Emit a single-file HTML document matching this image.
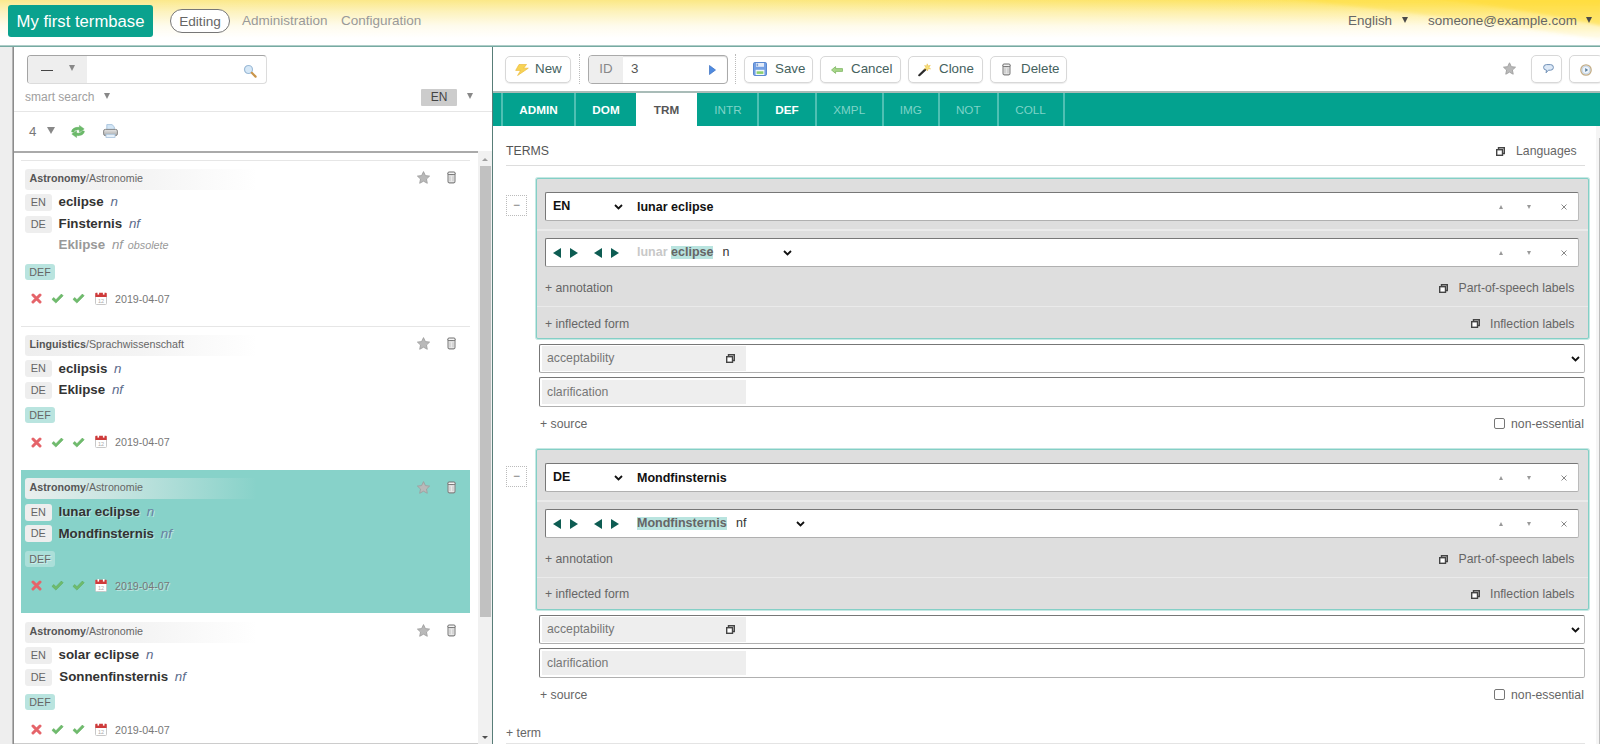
<!DOCTYPE html>
<html lang="en">
<head>
<meta charset="utf-8">
<title>My first termbase</title>
<style>
*{box-sizing:border-box;margin:0;padding:0}
html,body{width:1600px;height:744px;overflow:hidden;background:#fff}
body{font-family:"Liberation Sans",Arial,sans-serif;font-size:13.33px;color:#333;position:relative}
.abs{position:absolute}
/* header */
#header{z-index:5;position:absolute;left:0;top:0;width:1600px;height:47px;background:linear-gradient(to bottom,rgba(0,0,0,0) 45px,#aecdc8 45px,#aecdc8 46px,#76aaa2 46px),linear-gradient(to bottom,rgba(255,255,255,0) 0px,rgba(255,255,255,.45) 12px,rgba(255,255,255,.85) 26px,#fff 38px),linear-gradient(to right,#fbe98e 0%,#fbe884 45%,#fde466 75%,#ffe04c 100%);overflow:hidden}
#swoosh{position:absolute;left:1100px;top:0;width:500px;height:46px}
#tbname{position:absolute;left:8px;top:5px;width:145px;height:32px;background:#0aa28e;border-radius:3px;color:#fff;font-size:16.7px;line-height:34px;text-align:center;white-space:nowrap}
#editing{position:absolute;left:170px;top:9px;width:60px;height:24px;border:1px solid #777;border-radius:13px;background:#fff;color:#666;font-size:13.6px;line-height:23px;text-align:center}
.hlink{position:absolute;top:0;line-height:42px;color:#999;font-size:13.5px;white-space:nowrap}
.hr{position:absolute;top:0;line-height:41px;color:#666;font-size:13.45px;white-space:nowrap}
.tri{position:absolute;width:0;height:0;border-left:3.4px solid transparent;border-right:3.4px solid transparent;border-top:6.5px solid #4a4a4a}
/* left */
#lstrip{position:absolute;left:0;top:47px;width:14px;height:697px;background:#eee;border-right:1px solid #8c8c8c}
#lstrip:after{content:"";position:absolute;right:0;top:0;width:1px;height:100%;background:#b4b4b4}
#left{position:absolute;left:14px;top:46px;width:478px;height:698px;background:#fff}
#vline{position:absolute;left:492px;top:46px;width:1px;height:698px;background:#587d78;box-shadow:1px 0 0 rgba(150,205,198,.5)}
#searchbox{position:absolute;left:13px;top:9px;width:240px;height:29px;border:1px solid #a4a4a4;border-right-color:#dcdcdc;border-bottom-color:#dcdcdc;border-radius:4px;background:#fff;overflow:hidden}
#searchbox .sel{position:absolute;left:0;top:0;width:59px;height:27px;background:#eee}
.sep{position:absolute;left:0;height:1px;background:#e6e6e6}
#list{position:absolute;left:0;top:105px;width:464px;height:593px;border-top:2px solid #aaa;overflow:hidden}
#sbar{position:absolute;left:464px;top:105px;width:14px;height:593px;background:#f1f1f1}
#sbar .thumb{position:absolute;left:2px;top:15px;width:11px;height:450.5px;background:#c1c1c1}
.selbg{position:absolute;background:#87d2c9}
.selin .dom{background:linear-gradient(to right,rgba(240,240,240,.95) 0%,rgba(240,240,240,.55) 45%,rgba(240,240,240,0) 100%)}
.selin .def{background:rgba(255,255,255,.3)}
.selin .tm,.selin .date,.selin .def{text-shadow:1px 1px 0 rgba(255,255,255,.45)}
.dom{position:absolute;width:232px;height:21px;line-height:19.5px;padding-left:4.5px;font-size:10.7px;color:#666;background:linear-gradient(to right,#eeeeee 0%,#f4f4f4 50%,rgba(255,255,255,0) 100%);border-radius:3px;white-space:nowrap}
.dom b{color:#555}
.lg{position:absolute;width:26.5px;height:17px;line-height:17px;border-radius:3px;background:#eee;color:#666;font-size:10.9px;text-align:center}
.tm{margin-top:-.6px;position:absolute;font-size:13.33px;font-weight:bold;color:#333;white-space:nowrap;line-height:17px}
.tm i{font-weight:normal;color:#5b6b8c;margin-left:3px}
.tm.obs{color:#999}
.tm.obs i{color:#999}
.tm small{margin-left:1px;font-size:10.8px;font-weight:normal;font-style:italic;color:#999}
.def{position:absolute;width:30px;height:16px;line-height:16px;border-radius:3px;background:#b9e4df;color:#666;font-size:10.7px;text-align:center}
.date{position:absolute;font-size:10.7px;color:#777;line-height:14px;white-space:nowrap}
.ico{position:absolute}
/* right */
#right{position:absolute;left:493px;top:46px;width:1107px;height:698px;background:#fff}
.btn{position:absolute;top:10px;height:27px;border:1px solid #d8d8d8;border-radius:5px;background:#fff;font-size:13.33px;color:#45625e;line-height:24px;white-space:nowrap;box-shadow:0 1px 1px #ececec}
.btn span{position:absolute;top:0}
.dots{position:absolute;top:8px;width:0;height:30px;border-left:1px dotted #bbb}
#idbox{position:absolute;left:95px;top:9px;width:140px;height:29px;border:1px solid #aaa;border-radius:4px;overflow:hidden;background:#fff;box-shadow:inset 0 1px 1px #ddd}
#idbox .lab{position:absolute;left:0;top:0;width:34px;height:27px;background:#eee;color:#888;font-size:13.33px;line-height:26px;text-align:center}
#idbox .val{position:absolute;left:42px;top:0;line-height:26px;font-size:13.33px;color:#555}
#tabs{position:absolute;left:0;top:45px;width:1107px;height:35px;background:#03a28f;border-top:2px solid #a9bcb8}
.tab{position:absolute;top:0;height:33px;border-left:2px solid #4ec0b3;color:#fff;font-size:11.7px;font-weight:bold;line-height:33px;text-align:center}
.tab.dim{color:#7fd3c8;font-weight:normal}
.tab.on{background:#fff;color:#555;border-left:none;height:35px}
.tab.on + .tab{border-left-color:transparent}
.lbl{position:absolute;font-size:12.25px;color:#666;white-space:nowrap;line-height:15px}
.grp{position:absolute;width:1053px;height:161px;background:#dedede;border:1px solid #84cfc6;border-radius:2px;box-shadow:0 0 0 1px #c5e8e3}
.grp .divd{position:absolute;left:0;width:1051px;height:1px;background:#eaeaea}
.inp{position:absolute;left:8px;width:1035px;height:29px;background:#fff;border:1px solid #777;border-right-color:#bbb;border-bottom-color:#b0b0b0;border-radius:2px}
.inp2{position:absolute;left:45px;width:1048px;height:29px;background:#fff;border:1px solid #777;border-right-color:#bbb;border-bottom-color:#b0b0b0;border-radius:2px}
.inp2 .lab{position:absolute;left:1.5px;top:1.5px;width:204.5px;height:24.5px;background:#eee;color:#777;font-size:12.25px;line-height:24px;padding-left:5.5px}
.minus{position:absolute;width:21px;height:21px;border:1px dotted #bbb;color:#777;font-size:12px;line-height:18px;text-align:center}
.bt{font-size:12.5px;font-weight:bold;color:#111;position:absolute;line-height:27px;white-space:nowrap}
.hl{display:inline-block;height:13.3px;line-height:13.3px;color:#666;background:#b9e4df;vertical-align:baseline}
.selin .tm i{color:#6b80a0}
</style>
</head>
<body>
<div id="header">
  <svg id="swoosh" viewBox="0 0 500 46" preserveAspectRatio="none"><defs><filter id="bl" x="-10%" y="-50%" width="120%" height="200%"><feGaussianBlur stdDeviation="1.5"/></filter><linearGradient id="sg" x1="0" y1="0" x2="0" y2="1"><stop offset="0" stop-color="#ffde3c"/><stop offset="1" stop-color="#ffde3c" stop-opacity=".15"/></linearGradient></defs><g filter="url(#bl)"><path d="M180 -2 L502 -2 L502 40 Q380 20 180 -2Z" fill="url(#sg)" opacity=".5"/><path d="M330 -2 L502 -2 L502 26 Q430 10 330 -2Z" fill="#ffdd3a" opacity=".55"/></g></svg>
  <div id="tbname">My first termbase</div>
  <div id="editing">Editing</div>
  <div class="hlink" style="left:242px">Administration</div>
  <div class="hlink" style="left:341px">Configuration</div>
  <div class="hr" style="left:1348px">English</div><div class="tri" style="left:1402.3px;top:16.5px"></div>
  <div class="hr" style="left:1428px">someone@example.com</div><div class="tri" style="left:1586px;top:16.5px"></div>
</div>
<div id="lstrip"></div>
<div id="left">
  <div id="searchbox"><div class="sel"></div>
    <div class="abs" style="left:13px;top:14px;width:12px;height:1px;background:#444"></div>
    <div class="tri" style="left:41px;top:9px;border-left-width:3.5px;border-right-width:3.5px;border-top-width:6px;border-top-color:#888"></div>
    <svg class="ico" style="left:215px;top:8px" width="15" height="15" viewBox="0 0 15 15"><circle cx="5.5" cy="5.5" r="4" fill="#d6e8f7" stroke="#9dbbd6" stroke-width="1.2"/><path d="M8.8 8.8 L12.6 12.6" stroke="#c9954a" stroke-width="2.2" stroke-linecap="round"/></svg>
  </div>
  <div class="lbl" style="left:11px;top:44px;color:#a0a0a0;font-size:12px">smart search</div>
  <div class="tri" style="left:90px;top:47px;border-left-width:3.5px;border-right-width:3.5px;border-top-width:6.5px;border-top-color:#888"></div>
  <div class="abs" style="left:407px;top:43px;width:36px;height:17px;background:#ccc;color:#444;font-size:12px;line-height:17px;text-align:center;border-radius:1px">EN</div>
  <div class="tri" style="left:453px;top:47px;border-left-width:3.7px;border-right-width:3.7px;border-top-width:6.5px;border-top-color:#888"></div>
  <div class="sep" style="top:65px;width:478px"></div>
  <div class="lbl" style="left:15px;top:77.5px;font-size:13.33px;color:#777">4</div>
  <div class="tri" style="left:33px;top:81.3px;border-left-width:4.2px;border-right-width:4.2px;border-top-width:7px;border-top-color:#888"></div>
  <svg class="ico" style="left:57px;top:78.8px" width="14" height="13" viewBox="0 0 14 13"><path id="ra" d="M0.6 6.9 C0.8 3.4 4.5 1.9 8.4 2.5 L8.4 0.4 L13.2 3.9 L8.4 7.2 L8.4 5 C6 4.6 3.6 5.1 2.9 7.3Z" fill="#6cba6a" stroke="#58a858" stroke-width=".4"/><use href="#ra" transform="rotate(180 7 6.5)"/></svg>
  <svg class="ico" style="left:89px;top:78px" width="15" height="14" viewBox="0 0 15 14"><defs><linearGradient id="pg" x1="0" y1="0" x2="0" y2="1"><stop offset="0" stop-color="#e6e6e6"/><stop offset="1" stop-color="#a9a9a9"/></linearGradient></defs><path d="M3.8 6 V0.6 H9 L11.3 2.8 V6Z" fill="#d3e6f6" stroke="#9dbbd8" stroke-width=".8"/><rect x=".6" y="5.4" width="13.8" height="6.2" rx="1.7" fill="url(#pg)" stroke="#7d7d7d" stroke-width=".9"/><rect x="3" y="10.2" width="9" height="3.2" fill="#e6f0f9" stroke="#9dbbd8" stroke-width=".7"/></svg>
  <div id="list">
<div class="sep" style="left:7px;top:7px;width:449px"></div>
<div class="dom" style="left:11px;top:16px"><b>Astronomy</b>/Astronomie</div>
<svg class="ico" style="left:403px;top:18.2px" width="13" height="13" viewBox="0 0 13 13"><path d="M6.5 0.6 L8.4 4.6 L12.6 5.1 L9.5 8 L10.3 12.3 L6.5 10.2 L2.7 12.3 L3.5 8 L0.4 5.1 L4.6 4.6Z" fill="#b9b9b9" stroke="#9c9c9c" stroke-width=".8" stroke-linejoin="round"/></svg>
<svg class="ico" style="left:432.7px;top:18.2px" width="9" height="13" viewBox="0 0 9 13"><path d="M1 2.6 L1 10.6 Q1 11.8 2.4 11.9 L6.6 11.9 Q8 11.8 8 10.6 L8 2.6Z" fill="#e9e9e9" stroke="#828282" stroke-width="1.1"/><path d="M3 5.3 V10.3 M6 5.3 V10.3" stroke="#c9c9c9" stroke-width="1.2"/><rect x="0.8" y="1" width="7.4" height="2.6" rx="1.3" fill="#f5f5f5" stroke="#6f6f6f" stroke-width="1"/></svg>
<div class="lg" style="left:11px;top:41px">EN</div>
<div class="tm" style="left:44.5px;top:41px">eclipse <i>n</i></div>
<div class="lg" style="left:11px;top:63px">DE</div>
<div class="tm" style="left:44.5px;top:63px">Finsternis <i>nf</i></div>
<div class="tm obs" style="left:44.5px;top:83.5px">Eklipse <i>nf</i> <small>obsolete</small></div>
<div class="def" style="left:11px;top:111px">DEF</div>
<svg class="ico" style="left:16.5px;top:140.3px" width="11" height="11" viewBox="0 0 11 11"><path d="M2 2 L9 9 M9 2 L2 9" stroke="#e5646a" stroke-width="3" stroke-linecap="round"/></svg>
<svg class="ico" style="left:36.7px;top:140.3px" width="13" height="11" viewBox="0 0 13 11"><path d="M0.9 6.3 L2.9 4.5 L4.9 6.7 L10.4 1 L12.2 2.8 L4.9 10.1Z" fill="#6fbb6c" stroke="#58a858" stroke-width=".5" stroke-linejoin="round"/></svg>
<svg class="ico" style="left:58.2px;top:140.3px" width="13" height="11" viewBox="0 0 13 11"><path d="M0.9 6.3 L2.9 4.5 L4.9 6.7 L10.4 1 L12.2 2.8 L4.9 10.1Z" fill="#6fbb6c" stroke="#58a858" stroke-width=".5" stroke-linejoin="round"/></svg>
<svg class="ico" style="left:81px;top:138.8px" width="12" height="13" viewBox="0 0 12 13"><rect x=".5" y="1.5" width="11" height="11" rx="1" fill="#fff" stroke="#c8c8c8"/><path d="M.3 1.5 Q.3 .8 1 .8 H11 Q11.7 .8 11.7 1.5 V5 H.3Z" fill="#cf3a3a"/><rect x="2.5" y="0" width="1.6" height="2.6" fill="#fff"/><rect x="7.9" y="0" width="1.6" height="2.6" fill="#fff"/><text x="6" y="11" font-size="5.5" font-family="Liberation Sans" fill="#aaa" text-anchor="middle">12</text></svg>
<div class="date" style="left:101px;top:138.8px">2019-04-07</div>
<div class="sep" style="left:7px;top:173px;width:449px"></div>
<div class="dom" style="left:11px;top:182px"><b>Linguistics</b>/Sprachwissenschaft</div>
<svg class="ico" style="left:403px;top:184.2px" width="13" height="13" viewBox="0 0 13 13"><path d="M6.5 0.6 L8.4 4.6 L12.6 5.1 L9.5 8 L10.3 12.3 L6.5 10.2 L2.7 12.3 L3.5 8 L0.4 5.1 L4.6 4.6Z" fill="#b9b9b9" stroke="#9c9c9c" stroke-width=".8" stroke-linejoin="round"/></svg>
<svg class="ico" style="left:432.7px;top:184.2px" width="9" height="13" viewBox="0 0 9 13"><path d="M1 2.6 L1 10.6 Q1 11.8 2.4 11.9 L6.6 11.9 Q8 11.8 8 10.6 L8 2.6Z" fill="#e9e9e9" stroke="#828282" stroke-width="1.1"/><path d="M3 5.3 V10.3 M6 5.3 V10.3" stroke="#c9c9c9" stroke-width="1.2"/><rect x="0.8" y="1" width="7.4" height="2.6" rx="1.3" fill="#f5f5f5" stroke="#6f6f6f" stroke-width="1"/></svg>
<div class="lg" style="left:11px;top:207.2px">EN</div>
<div class="tm" style="left:44.5px;top:207.2px">eclipsis <i>n</i></div>
<div class="lg" style="left:11px;top:228.5px">DE</div>
<div class="tm" style="left:44.5px;top:228.5px">Eklipse <i>nf</i></div>
<div class="def" style="left:11px;top:254px">DEF</div>
<svg class="ico" style="left:16.5px;top:283.6px" width="11" height="11" viewBox="0 0 11 11"><path d="M2 2 L9 9 M9 2 L2 9" stroke="#e5646a" stroke-width="3" stroke-linecap="round"/></svg>
<svg class="ico" style="left:36.7px;top:283.6px" width="13" height="11" viewBox="0 0 13 11"><path d="M0.9 6.3 L2.9 4.5 L4.9 6.7 L10.4 1 L12.2 2.8 L4.9 10.1Z" fill="#6fbb6c" stroke="#58a858" stroke-width=".5" stroke-linejoin="round"/></svg>
<svg class="ico" style="left:58.2px;top:283.6px" width="13" height="11" viewBox="0 0 13 11"><path d="M0.9 6.3 L2.9 4.5 L4.9 6.7 L10.4 1 L12.2 2.8 L4.9 10.1Z" fill="#6fbb6c" stroke="#58a858" stroke-width=".5" stroke-linejoin="round"/></svg>
<svg class="ico" style="left:81px;top:282.1px" width="12" height="13" viewBox="0 0 12 13"><rect x=".5" y="1.5" width="11" height="11" rx="1" fill="#fff" stroke="#c8c8c8"/><path d="M.3 1.5 Q.3 .8 1 .8 H11 Q11.7 .8 11.7 1.5 V5 H.3Z" fill="#cf3a3a"/><rect x="2.5" y="0" width="1.6" height="2.6" fill="#fff"/><rect x="7.9" y="0" width="1.6" height="2.6" fill="#fff"/><text x="6" y="11" font-size="5.5" font-family="Liberation Sans" fill="#aaa" text-anchor="middle">12</text></svg>
<div class="date" style="left:101px;top:282.1px">2019-04-07</div>
<div class="selbg" style="left:7px;top:317px;width:449px;height:142.7px"><div class="abs selin" style="left:-7px;top:-317px">
<div class="dom" style="left:11px;top:325.4px"><b>Astronomy</b>/Astronomie</div>
<svg class="ico" style="left:403px;top:327.6px" width="13" height="13" viewBox="0 0 13 13"><path d="M6.5 0.6 L8.4 4.6 L12.6 5.1 L9.5 8 L10.3 12.3 L6.5 10.2 L2.7 12.3 L3.5 8 L0.4 5.1 L4.6 4.6Z" fill="#b9b9b9" stroke="#9c9c9c" stroke-width=".8" stroke-linejoin="round"/></svg>
<svg class="ico" style="left:432.7px;top:327.6px" width="9" height="13" viewBox="0 0 9 13"><path d="M1 2.6 L1 10.6 Q1 11.8 2.4 11.9 L6.6 11.9 Q8 11.8 8 10.6 L8 2.6Z" fill="#e9e9e9" stroke="#828282" stroke-width="1.1"/><path d="M3 5.3 V10.3 M6 5.3 V10.3" stroke="#c9c9c9" stroke-width="1.2"/><rect x="0.8" y="1" width="7.4" height="2.6" rx="1.3" fill="#f5f5f5" stroke="#6f6f6f" stroke-width="1"/></svg>
<div class="lg" style="left:11px;top:351px">EN</div>
<div class="tm" style="left:44.5px;top:351px">lunar eclipse <i>n</i></div>
<div class="lg" style="left:11px;top:372.3px">DE</div>
<div class="tm" style="left:44.5px;top:372.3px">Mondfinsternis <i>nf</i></div>
<div class="def" style="left:11px;top:397.8px">DEF</div>
<svg class="ico" style="left:16.5px;top:427.3px" width="11" height="11" viewBox="0 0 11 11"><path d="M2 2 L9 9 M9 2 L2 9" stroke="#e5646a" stroke-width="3" stroke-linecap="round"/></svg>
<svg class="ico" style="left:36.7px;top:427.3px" width="13" height="11" viewBox="0 0 13 11"><path d="M0.9 6.3 L2.9 4.5 L4.9 6.7 L10.4 1 L12.2 2.8 L4.9 10.1Z" fill="#6fbb6c" stroke="#58a858" stroke-width=".5" stroke-linejoin="round"/></svg>
<svg class="ico" style="left:58.2px;top:427.3px" width="13" height="11" viewBox="0 0 13 11"><path d="M0.9 6.3 L2.9 4.5 L4.9 6.7 L10.4 1 L12.2 2.8 L4.9 10.1Z" fill="#6fbb6c" stroke="#58a858" stroke-width=".5" stroke-linejoin="round"/></svg>
<svg class="ico" style="left:81px;top:425.8px" width="12" height="13" viewBox="0 0 12 13"><rect x=".5" y="1.5" width="11" height="11" rx="1" fill="#fff" stroke="#c8c8c8"/><path d="M.3 1.5 Q.3 .8 1 .8 H11 Q11.7 .8 11.7 1.5 V5 H.3Z" fill="#cf3a3a"/><rect x="2.5" y="0" width="1.6" height="2.6" fill="#fff"/><rect x="7.9" y="0" width="1.6" height="2.6" fill="#fff"/><text x="6" y="11" font-size="5.5" font-family="Liberation Sans" fill="#aaa" text-anchor="middle">12</text></svg>
<div class="date" style="left:101px;top:425.8px">2019-04-07</div>
</div></div>
<div class="dom" style="left:11px;top:469px"><b>Astronomy</b>/Astronomie</div>
<svg class="ico" style="left:403px;top:471.2px" width="13" height="13" viewBox="0 0 13 13"><path d="M6.5 0.6 L8.4 4.6 L12.6 5.1 L9.5 8 L10.3 12.3 L6.5 10.2 L2.7 12.3 L3.5 8 L0.4 5.1 L4.6 4.6Z" fill="#b9b9b9" stroke="#9c9c9c" stroke-width=".8" stroke-linejoin="round"/></svg>
<svg class="ico" style="left:432.7px;top:471.2px" width="9" height="13" viewBox="0 0 9 13"><path d="M1 2.6 L1 10.6 Q1 11.8 2.4 11.9 L6.6 11.9 Q8 11.8 8 10.6 L8 2.6Z" fill="#e9e9e9" stroke="#828282" stroke-width="1.1"/><path d="M3 5.3 V10.3 M6 5.3 V10.3" stroke="#c9c9c9" stroke-width="1.2"/><rect x="0.8" y="1" width="7.4" height="2.6" rx="1.3" fill="#f5f5f5" stroke="#6f6f6f" stroke-width="1"/></svg>
<div class="lg" style="left:11px;top:494px">EN</div>
<div class="tm" style="left:44.5px;top:494px">solar eclipse <i>n</i></div>
<div class="lg" style="left:11px;top:515.5px">DE</div>
<div class="tm" style="left:45.3px;top:515.5px">Sonnenfinsternis <i>nf</i></div>
<div class="def" style="left:11px;top:541.3px">DEF</div>
<svg class="ico" style="left:16.5px;top:571.2px" width="11" height="11" viewBox="0 0 11 11"><path d="M2 2 L9 9 M9 2 L2 9" stroke="#e5646a" stroke-width="3" stroke-linecap="round"/></svg>
<svg class="ico" style="left:36.7px;top:571.2px" width="13" height="11" viewBox="0 0 13 11"><path d="M0.9 6.3 L2.9 4.5 L4.9 6.7 L10.4 1 L12.2 2.8 L4.9 10.1Z" fill="#6fbb6c" stroke="#58a858" stroke-width=".5" stroke-linejoin="round"/></svg>
<svg class="ico" style="left:58.2px;top:571.2px" width="13" height="11" viewBox="0 0 13 11"><path d="M0.9 6.3 L2.9 4.5 L4.9 6.7 L10.4 1 L12.2 2.8 L4.9 10.1Z" fill="#6fbb6c" stroke="#58a858" stroke-width=".5" stroke-linejoin="round"/></svg>
<svg class="ico" style="left:81px;top:569.7px" width="12" height="13" viewBox="0 0 12 13"><rect x=".5" y="1.5" width="11" height="11" rx="1" fill="#fff" stroke="#c8c8c8"/><path d="M.3 1.5 Q.3 .8 1 .8 H11 Q11.7 .8 11.7 1.5 V5 H.3Z" fill="#cf3a3a"/><rect x="2.5" y="0" width="1.6" height="2.6" fill="#fff"/><rect x="7.9" y="0" width="1.6" height="2.6" fill="#fff"/><text x="6" y="11" font-size="5.5" font-family="Liberation Sans" fill="#aaa" text-anchor="middle">12</text></svg>
<div class="date" style="left:101px;top:569.7px">2019-04-07</div>
  </div>
  <div id="sbar"><div class="thumb"></div><div class="abs" style="left:4px;top:6.5px;width:0;height:0;border-left:3.2px solid transparent;border-right:3.2px solid transparent;border-bottom:3.6px solid #a0a0a0"></div><div class="abs" style="left:4px;top:584.5px;width:0;height:0;border-left:3.2px solid transparent;border-right:3.2px solid transparent;border-top:3.6px solid #505050"></div></div>
  <div class="sep" style="top:697px;width:464px;background:#ccc"></div>
</div>
<div id="vline"></div>
<div id="right">
<div class="btn" style="left:12px;width:66px"><svg class="ico" style="left:8.5px;top:7px" width="14" height="12" viewBox="0 0 14 12"><path d="M4 0.5 L11.5 0.5 L8.6 4.2 L13.3 4.2 L2.6 11.5 L5.6 6.4 L0.7 6.4Z" fill="#f7d355" stroke="#ecbb3d" stroke-width=".7" stroke-linejoin="round"/></svg><span style="left:29px">New</span></div>
<div class="dots" style="left:86px"></div>
<div id="idbox"><div class="lab">ID</div><div class="val">3</div><svg class="ico" style="left:120px;top:9px" width="7" height="10" viewBox="0 0 7 10"><path d="M0.5 0.5 L6.5 5 L0.5 9.5Z" fill="#4f8be0" stroke="#3a6fc0" stroke-width=".7"/></svg></div>
<div class="dots" style="left:242px"></div>
<div class="btn" style="left:251px;width:69px"><svg class="ico" style="left:7.5px;top:4.5px" width="14" height="14" viewBox="0 0 14 14"><rect x=".5" y=".5" width="13" height="13" rx="1.3" fill="#74a0e3" stroke="#5a88d0"/><rect x="3" y="1" width="8" height="3.8" fill="#e3ebf8"/><rect x="3.6" y="1.6" width="1.5" height="2.6" fill="#7f9fd0"/><rect x="2.6" y="7.8" width="8.8" height="5.2" fill="#f3f7fc"/><rect x="3.6" y="9.3" width="6.8" height="2.6" fill="#8ccf6d"/></svg><span style="left:30px">Save</span></div>
<div class="btn" style="left:327px;width:81px"><svg class="ico" style="left:9.5px;top:8.5px" width="12" height="8" viewBox="0 0 12 8"><path d="M0.5 4 L4.6 0.6 L4.6 2.6 L11.5 2.6 L11.5 5.4 L4.6 5.4 L4.6 7.4Z" fill="#a9d68b" stroke="#74b257" stroke-width=".7"/></svg><span style="left:30px">Cancel</span></div>
<div class="btn" style="left:415px;width:75px"><svg class="ico" style="left:9px;top:6px" width="14" height="14" viewBox="0 0 14 14"><path d="M1.3 12.2 L7.2 6.6" stroke="#2b2b2b" stroke-width="2.2" stroke-linecap="round"/><path d="M9.2 0.8 L9.9 3 L12.3 2.4 L10.8 4.2 L12.6 5.9 L10.2 5.7 L9.4 8 L8.5 5.8 L6.2 6.2 L7.9 4.4 L6.6 2.5 L8.7 3Z" fill="#f8e27a" stroke="#e9b93a" stroke-width=".5"/></svg><span style="left:30px">Clone</span></div>
<div class="btn" style="left:497px;width:77px"><svg class="ico" style="left:10.5px;top:5.5px" width="9" height="13" viewBox="0 0 9 13"><path d="M1 2.6 L1 10.6 Q1 11.8 2.4 11.9 L6.6 11.9 Q8 11.8 8 10.6 L8 2.6Z" fill="#e4e4e4" stroke="#828282" stroke-width="1.1"/><path d="M3 5.3 V10.3 M6 5.3 V10.3" stroke="#c4c4c4" stroke-width="1.2"/><rect x="0.8" y="1" width="7.4" height="2.6" rx="1.3" fill="#f2f2f2" stroke="#6f6f6f" stroke-width="1"/></svg><span style="left:30px">Delete</span></div>
<svg class="ico" style="left:1010px;top:16px" width="13" height="13" viewBox="0 0 13 13"><path d="M6.5 0.8 L8.3 4.7 L12.5 5.2 L9.4 8 L10.2 12.2 L6.5 10.1 L2.8 12.2 L3.6 8 L0.5 5.2 L4.7 4.7Z" fill="#b9b9b9" stroke="#a3a3a3" stroke-width="1" stroke-linejoin="round"/></svg>
<div class="btn" style="left:1038px;top:9px;width:31px;height:28px"><svg class="ico" style="left:10.5px;top:8px" width="11" height="10" viewBox="0 0 11 10"><path d="M3.5 .6 H7.5 Q10.4 .6 10.4 3.4 Q10.4 6.2 7.5 6.2 H5.4 L3.1 8.8 L3.5 6.2 Q.6 6 .6 3.4 Q.6 .6 3.5 .6Z" fill="#dde9f7" stroke="#6f8fb5" stroke-width="1" stroke-linejoin="round"/></svg></div>
<div class="btn" style="left:1076px;top:9px;width:34px;height:28px"><svg class="ico" style="left:9.5px;top:7.5px" width="12" height="12" viewBox="0 0 12 12"><circle cx="6" cy="6" r="5.2" fill="#e3eef9" stroke="#c4ad85" stroke-width="1.3"/><circle cx="6" cy="6" r="3.9" fill="#eef5fc" stroke="#a9bfd8" stroke-width=".6"/><path d="M5.2 4 V8 L8.2 6Z" fill="#5a7f9c"/></svg></div>
<div id="tabs"><div class="tab " style="left:8px;width:73px">ADMIN</div><div class="tab " style="left:81px;width:62px">DOM</div><div class="tab on" style="left:143px;width:61px">TRM</div><div class="tab dim" style="left:204px;width:60px">INTR</div><div class="tab " style="left:264px;width:58px">DEF</div><div class="tab dim" style="left:322px;width:66.5px">XMPL</div><div class="tab dim" style="left:388.5px;width:56.5px">IMG</div><div class="tab dim" style="left:445px;width:58.5px">NOT</div><div class="tab dim" style="left:503.5px;width:66.0px">COLL</div><div class="tab" style="left:569.5px;width:2px"></div></div>
<div class="lbl" style="left:13px;top:98px;font-size:12.3px;color:#555">TERMS</div>
<svg class="ico" style="left:1003px;top:101px" width="9" height="9" viewBox="0 0 9 9"><path d="M2.5 2.5 V0.7 H8.3 V6.5 H6.5" fill="none" stroke="#444" stroke-width="1.4"/><rect x=".7" y="2.7" width="5.8" height="5.6" fill="#fff" stroke="#444" stroke-width="1.4"/></svg>
<div class="lbl" style="left:1023px;top:98px">Languages</div>
<div class="sep" style="left:13px;top:119px;width:1079px;background:#ddd"></div>
<div class="abs" style="left:1103px;top:80px;width:4px;height:618px;background:#f5f5f5"></div><div class="abs" style="left:1106px;top:92px;width:1px;height:606px;background:#bdbdbd"></div>
<div class="minus" style="left:13px;top:149px">&minus;</div><div class="grp" style="left:43px;top:132px"><div class="inp" style="left:8px;top:13px;width:1034px"><div class="bt" style="left:7px;top:0px">EN</div><svg class="ico" style="left:68px;top:11px" width="9" height="6" viewBox="0 0 9 6"><path d="M1 1 L4.5 4.5 L8 1" fill="none" stroke="#111" stroke-width="1.8"/></svg><div class="bt" style="left:91px;top:1px">lunar eclipse</div><div class="abs" style="left:953px;top:12px;border-left:2.5px solid transparent;border-right:2.5px solid transparent;border-bottom:4px solid #999;width:0;height:0"></div><div class="abs" style="left:981px;top:12px;border-left:2.5px solid transparent;border-right:2.5px solid transparent;border-top:4px solid #999;width:0;height:0"></div><svg class="ico" style="left:1015px;top:11px" width="6" height="6" viewBox="0 0 6 6"><path d="M.5 .5 L5.5 5.5 M5.5 .5 L.5 5.5" stroke="#888" stroke-width="1"/></svg></div><div class="divd" style="top:50px;height:2px"></div><div class="inp" style="left:8px;top:59px;width:1034px"><svg class="ico" style="left:6.5px;top:9px" width="8" height="10" viewBox="0 0 8 10"><path d="M8 0 L8 10 L0 5Z" fill="#0d5c52"/></svg><svg class="ico" style="left:23.5px;top:9px" width="8" height="10" viewBox="0 0 8 10"><path d="M0 0 L0 10 L8 5Z" fill="#0d5c52"/></svg><svg class="ico" style="left:48px;top:9px" width="8" height="10" viewBox="0 0 8 10"><path d="M8 0 L8 10 L0 5Z" fill="#0d5c52"/></svg><svg class="ico" style="left:65px;top:9px" width="8" height="10" viewBox="0 0 8 10"><path d="M0 0 L0 10 L8 5Z" fill="#0d5c52"/></svg><div class="bt" style="left:91px;font-weight:normal"><b style="color:#c8c8c8">lunar</b> <b class="hl">eclipse</b></div><div class="bt" style="left:176.5px;font-weight:normal;color:#333">n</div><svg class="ico" style="left:237px;top:11px" width="9" height="6" viewBox="0 0 9 6"><path d="M1 1 L4.5 4.5 L8 1" fill="none" stroke="#111" stroke-width="1.8"/></svg><div class="abs" style="left:953px;top:12px;border-left:2.5px solid transparent;border-right:2.5px solid transparent;border-bottom:4px solid #999;width:0;height:0"></div><div class="abs" style="left:981px;top:12px;border-left:2.5px solid transparent;border-right:2.5px solid transparent;border-top:4px solid #999;width:0;height:0"></div><svg class="ico" style="left:1015px;top:11px" width="6" height="6" viewBox="0 0 6 6"><path d="M.5 .5 L5.5 5.5 M5.5 .5 L.5 5.5" stroke="#888" stroke-width="1"/></svg></div><div class="lbl" style="left:8px;top:102.2px">+ annotation</div><svg class="ico" style="left:902px;top:105px" width="9" height="9" viewBox="0 0 9 9"><path d="M2.5 2.5 V0.7 H8.3 V6.5 H6.5" fill="none" stroke="#444" stroke-width="1.4"/><rect x=".7" y="2.7" width="5.8" height="5.6" fill="#fff" stroke="#444" stroke-width="1.4"/></svg><div class="lbl" style="left:921.5px;top:102.2px">Part-of-speech labels</div><div class="divd" style="top:127px"></div><div class="lbl" style="left:8px;top:137.5px">+ inflected form</div><svg class="ico" style="left:934px;top:140px" width="9" height="9" viewBox="0 0 9 9"><path d="M2.5 2.5 V0.7 H8.3 V6.5 H6.5" fill="none" stroke="#444" stroke-width="1.4"/><rect x=".7" y="2.7" width="5.8" height="5.6" fill="#fff" stroke="#444" stroke-width="1.4"/></svg><div class="lbl" style="left:953px;top:137.5px">Inflection labels</div></div><div class="inp2" style="left:46px;top:297.5px;width:1046px"><div class="lab">acceptability</div><svg class="ico" style="left:185.5px;top:9.5px" width="9" height="9" viewBox="0 0 9 9"><path d="M2.5 2.5 V0.7 H8.3 V6.5 H6.5" fill="none" stroke="#444" stroke-width="1.4"/><rect x=".7" y="2.7" width="5.8" height="5.6" fill="#fff" stroke="#444" stroke-width="1.4"/></svg><svg class="ico" style="left:1031px;top:11px" width="9" height="6" viewBox="0 0 9 6"><path d="M1 1 L4.5 4.5 L8 1" fill="none" stroke="#111" stroke-width="1.8"/></svg></div><div class="inp2" style="left:46px;top:331px;width:1046px;height:30px"><div class="lab" style="height:24.5px">clarification</div></div><div class="lbl" style="left:47px;top:371px">+ source</div><div class="abs" style="left:1001px;top:372px;width:11px;height:11px;border:1px solid #767676;border-radius:2px;background:#fff"></div><div class="lbl" style="left:1018px;top:371px">non-essential</div>
<div class="minus" style="left:13px;top:420px">&minus;</div><div class="grp" style="left:43px;top:403px"><div class="inp" style="left:8px;top:13px;width:1034px"><div class="bt" style="left:7px;top:0px">DE</div><svg class="ico" style="left:68px;top:11px" width="9" height="6" viewBox="0 0 9 6"><path d="M1 1 L4.5 4.5 L8 1" fill="none" stroke="#111" stroke-width="1.8"/></svg><div class="bt" style="left:91px;top:1px">Mondfinsternis</div><div class="abs" style="left:953px;top:12px;border-left:2.5px solid transparent;border-right:2.5px solid transparent;border-bottom:4px solid #999;width:0;height:0"></div><div class="abs" style="left:981px;top:12px;border-left:2.5px solid transparent;border-right:2.5px solid transparent;border-top:4px solid #999;width:0;height:0"></div><svg class="ico" style="left:1015px;top:11px" width="6" height="6" viewBox="0 0 6 6"><path d="M.5 .5 L5.5 5.5 M5.5 .5 L.5 5.5" stroke="#888" stroke-width="1"/></svg></div><div class="divd" style="top:50px;height:2px"></div><div class="inp" style="left:8px;top:59px;width:1034px"><svg class="ico" style="left:6.5px;top:9px" width="8" height="10" viewBox="0 0 8 10"><path d="M8 0 L8 10 L0 5Z" fill="#0d5c52"/></svg><svg class="ico" style="left:23.5px;top:9px" width="8" height="10" viewBox="0 0 8 10"><path d="M0 0 L0 10 L8 5Z" fill="#0d5c52"/></svg><svg class="ico" style="left:48px;top:9px" width="8" height="10" viewBox="0 0 8 10"><path d="M8 0 L8 10 L0 5Z" fill="#0d5c52"/></svg><svg class="ico" style="left:65px;top:9px" width="8" height="10" viewBox="0 0 8 10"><path d="M0 0 L0 10 L8 5Z" fill="#0d5c52"/></svg><div class="bt" style="left:91px;font-weight:normal"><b class="hl">Mondfinsternis</b></div><div class="bt" style="left:190px;font-weight:normal;color:#333">nf</div><svg class="ico" style="left:250px;top:11px" width="9" height="6" viewBox="0 0 9 6"><path d="M1 1 L4.5 4.5 L8 1" fill="none" stroke="#111" stroke-width="1.8"/></svg><div class="abs" style="left:953px;top:12px;border-left:2.5px solid transparent;border-right:2.5px solid transparent;border-bottom:4px solid #999;width:0;height:0"></div><div class="abs" style="left:981px;top:12px;border-left:2.5px solid transparent;border-right:2.5px solid transparent;border-top:4px solid #999;width:0;height:0"></div><svg class="ico" style="left:1015px;top:11px" width="6" height="6" viewBox="0 0 6 6"><path d="M.5 .5 L5.5 5.5 M5.5 .5 L.5 5.5" stroke="#888" stroke-width="1"/></svg></div><div class="lbl" style="left:8px;top:101.6px">+ annotation</div><svg class="ico" style="left:902px;top:105px" width="9" height="9" viewBox="0 0 9 9"><path d="M2.5 2.5 V0.7 H8.3 V6.5 H6.5" fill="none" stroke="#444" stroke-width="1.4"/><rect x=".7" y="2.7" width="5.8" height="5.6" fill="#fff" stroke="#444" stroke-width="1.4"/></svg><div class="lbl" style="left:921.5px;top:101.6px">Part-of-speech labels</div><div class="divd" style="top:127px"></div><div class="lbl" style="left:8px;top:136.9px">+ inflected form</div><svg class="ico" style="left:934px;top:140px" width="9" height="9" viewBox="0 0 9 9"><path d="M2.5 2.5 V0.7 H8.3 V6.5 H6.5" fill="none" stroke="#444" stroke-width="1.4"/><rect x=".7" y="2.7" width="5.8" height="5.6" fill="#fff" stroke="#444" stroke-width="1.4"/></svg><div class="lbl" style="left:953px;top:136.9px">Inflection labels</div></div><div class="inp2" style="left:46px;top:568.5px;width:1046px"><div class="lab">acceptability</div><svg class="ico" style="left:185.5px;top:9.5px" width="9" height="9" viewBox="0 0 9 9"><path d="M2.5 2.5 V0.7 H8.3 V6.5 H6.5" fill="none" stroke="#444" stroke-width="1.4"/><rect x=".7" y="2.7" width="5.8" height="5.6" fill="#fff" stroke="#444" stroke-width="1.4"/></svg><svg class="ico" style="left:1031px;top:11px" width="9" height="6" viewBox="0 0 9 6"><path d="M1 1 L4.5 4.5 L8 1" fill="none" stroke="#111" stroke-width="1.8"/></svg></div><div class="inp2" style="left:46px;top:602px;width:1046px;height:30px"><div class="lab" style="height:24.5px">clarification</div></div><div class="lbl" style="left:47px;top:642px">+ source</div><div class="abs" style="left:1001px;top:643px;width:11px;height:11px;border:1px solid #767676;border-radius:2px;background:#fff"></div><div class="lbl" style="left:1018px;top:642px">non-essential</div>
<div class="lbl" style="left:13px;top:680px">+ term</div>
<div class="sep" style="left:13px;top:697px;width:1079px;background:#e4e4e4"></div>
</div>
</body>
</html>
